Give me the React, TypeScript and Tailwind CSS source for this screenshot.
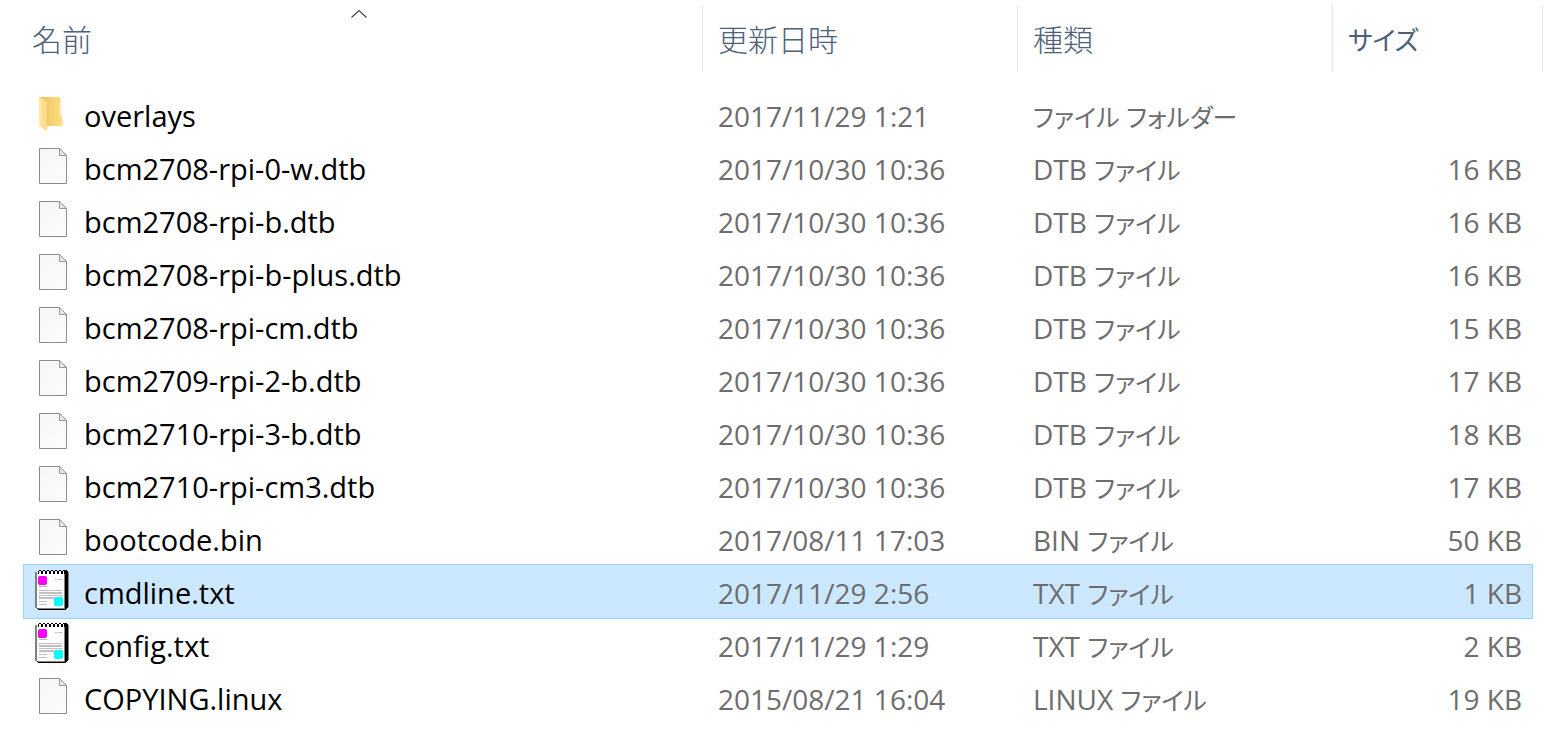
type Kind = "folder" | "file" | "text";
type Entry = { name: string; date: string; ext: string; type: string; size: string; kind: Kind; selected?: boolean };

const entries: Entry[] = [
  { name: "overlays", date: "2017/11/29 1:21", ext: "", type: "ファイル フォルダー", size: "", kind: "folder" },
  { name: "bcm2708-rpi-0-w.dtb", date: "2017/10/30 10:36", ext: "DTB", type: "ファイル", size: "16 KB", kind: "file" },
  { name: "bcm2708-rpi-b.dtb", date: "2017/10/30 10:36", ext: "DTB", type: "ファイル", size: "16 KB", kind: "file" },
  { name: "bcm2708-rpi-b-plus.dtb", date: "2017/10/30 10:36", ext: "DTB", type: "ファイル", size: "16 KB", kind: "file" },
  { name: "bcm2708-rpi-cm.dtb", date: "2017/10/30 10:36", ext: "DTB", type: "ファイル", size: "15 KB", kind: "file" },
  { name: "bcm2709-rpi-2-b.dtb", date: "2017/10/30 10:36", ext: "DTB", type: "ファイル", size: "17 KB", kind: "file" },
  { name: "bcm2710-rpi-3-b.dtb", date: "2017/10/30 10:36", ext: "DTB", type: "ファイル", size: "18 KB", kind: "file" },
  { name: "bcm2710-rpi-cm3.dtb", date: "2017/10/30 10:36", ext: "DTB", type: "ファイル", size: "17 KB", kind: "file" },
  { name: "bootcode.bin", date: "2017/08/11 17:03", ext: "BIN", type: "ファイル", size: "50 KB", kind: "file" },
  { name: "cmdline.txt", date: "2017/11/29 2:56", ext: "TXT", type: "ファイル", size: "1 KB", kind: "text", selected: true },
  { name: "config.txt", date: "2017/11/29 1:29", ext: "TXT", type: "ファイル", size: "2 KB", kind: "text" },
  { name: "COPYING.linux", date: "2015/08/21 16:04", ext: "LINUX", type: "ファイル", size: "19 KB", kind: "file" },
];

function FolderIcon() {
  return (
    <svg width="34" height="43" viewBox="0 0 34 43" aria-hidden="true">
      <defs>
        <linearGradient id="folder-back" x1="0" x2="1">
          <stop offset="0" stopColor="#e8c35c" />
          <stop offset="1" stopColor="#ffdf86" />
        </linearGradient>
        <linearGradient id="folder-front" x1="0" x2="1">
          <stop offset="0" stopColor="#ffe9a6" />
          <stop offset="1" stopColor="#fdd97b" />
        </linearGradient>
      </defs>
      <path d="M5 4H25.500V21L27.500 24V33H11Z" fill="url(#folder-back)" />
      <path d="M4 4L12 9V38L4 33Z" fill="url(#folder-front)" />
    </svg>
  );
}

function FileIcon() {
  return (
    <svg width="34" height="43" viewBox="0 0 34 43" aria-hidden="true">
      <defs>
        <linearGradient id="page" x1="0" y1="0" x2="1" y2="1">
          <stop offset="0" stopColor="#f5f6f8" />
          <stop offset="1" stopColor="#fbfcfc" />
        </linearGradient>
      </defs>
      <path d="M4.500 2.500H24.500L31.500 9.500V37.500H4.500Z" fill="url(#page)" stroke="#8c8c8c" />
      <path d="M24.500 2.500V9.500H31.500Z" fill="#e6e6e6" stroke="#999999" />
    </svg>
  );
}

function TextIcon() {
  return (
    <svg width="34" height="43" viewBox="0 1 34 43" shapeRendering="crispEdges" aria-hidden="true">
      <path d="M2 3H30V39H2Z" fill="#ffffff" />
      <path d="M0 3H2V39H0Z" fill="#808080" />
      <path d="M2 39H30V40H31V41H3V40H2Z" fill="#000000" />
      <path d="M3 39H30V40H3Z" fill="#808080" />
      <path d="M29 2H33V39H32V40H30V39H29Z" fill="#000000" />
      <path d="M29 5H30V39H29Z" fill="#808080" />
      <path d="M33 3H34V38H33Z" fill="#808080" />
      <path d="M3 2H4V5H3ZM6 2H8V5H6ZM10 2H12V5H10ZM14 2H16V5H14ZM18 2H20V5H18ZM22 2H24V5H22ZM26 2H28V5H26ZM4 1H6V2H4ZM8 1H10V2H8ZM12 1H14V2H12ZM16 1H18V2H16ZM20 1H22V2H20ZM24 1H26V2H24ZM28 1H32V2H28Z" fill="#000000" />
      <path d="M20 10H22V11H20ZM23 10H27V11H23ZM4 17H12V18H4ZM4 21H27V22H4ZM4 23H27V25H4ZM4 26H27V27H4ZM4 28H19V30H4ZM4 32H12V33H4ZM4 35H12V36H4Z" fill="#c0c0c0" />
      <path d="M4 7H11V8H12V15H11V16H4V15H3V8H4Z" fill="#ff00ff" />
      <path d="M20 28H27V29H28V36H27V37H20V36H19V29H20Z" fill="#00ffff" />
    </svg>
  );
}

const icons = { folder: FolderIcon, file: FileIcon, text: TextIcon };

function ColumnHeader({ label, first, kana }: { label: string; first?: boolean; kana?: boolean }) {
  return (
    <button
      type="button"
      className={`relative flex h-[67px] w-full items-center border-r border-[#e5e5e5] pt-0.5 ${first ? "pl-2" : "pl-[15px]"} ${kana ? "text-[26px] font-normal" : ""}`}
    >
      {label}
      {first && (
        <svg className="absolute top-1 left-1/2 -ml-3" width="16" height="10" viewBox="0 0 16 10" fill="none" aria-hidden="true">
          <path d="M0.500 8.500L8 1.500L15.500 8.500" stroke="#444444" strokeWidth="1.2" />
        </svg>
      )}
    </button>
  );
}

function Row({ entry }: { entry: Entry }) {
  const Icon = icons[entry.kind];
  const on = entry.selected;
  const middle = on ? "bg-[#cce8ff] shadow-[0_1px_#99d1ff,0_-1px_#99d1ff]" : "";
  const left = on ? "bg-[#cce8ff] shadow-[-1px_1px_#99d1ff,-1px_-1px_#99d1ff,0_1px_#99d1ff,0_-1px_#99d1ff]" : "";
  const right = on ? "bg-[#cce8ff] shadow-[1px_1px_#99d1ff,1px_-1px_#99d1ff,0_1px_#99d1ff,0_-1px_#99d1ff]" : "";
  return (
    <tr className="h-[53px]" aria-selected={!!on}>
      <td className={`p-0 text-[29px] text-black ${left}`}>
        <div className="flex items-center gap-[15px] pl-[11px]">
          <Icon />
          <span className="pt-0.5">{entry.name}</span>
        </div>
      </td>
      <td className={`p-0 pt-0.5 pl-[15px] ${middle}`}>{entry.date}</td>
      <td className={`p-0 pt-1 pl-[15px] ${middle}`}>
        {entry.ext && <span>{entry.ext} </span>}
        <span className="text-[25px]">{entry.type}</span>
      </td>
      <td className={`p-0 pt-0.5 pr-2.5 text-right ${right}`}>{entry.size}</td>
    </tr>
  );
}

export default function App() {
  return (
    <main
      lang="ja"
      className="min-h-screen bg-white pt-[5px] pr-3 pl-6 font-['Open_Sans','Noto_Sans_CJK_JP',sans-serif] text-[28px] leading-10 whitespace-nowrap text-[#6d6d6d] [font-feature-settings:'palt']"
    >
      <table className="w-full table-fixed border-separate border-spacing-0">
        <colgroup>
          <col />
          <col className="w-[315px]" />
          <col className="w-[315px]" />
          <col className="w-[199px]" />
          <col className="w-[11px]" />
        </colgroup>
        <thead className="text-left text-[30px] text-[#4c607a]">
          <tr className="h-[83px]">
            <th className="p-0 align-top font-light" aria-sort="ascending"><ColumnHeader label="名前" first /></th>
            <th className="p-0 align-top font-light"><ColumnHeader label="更新日時" /></th>
            <th className="p-0 align-top font-light"><ColumnHeader label="種類" /></th>
            <th className="p-0 align-top font-light" colSpan={2}><ColumnHeader label="サイズ" kana /></th>
          </tr>
        </thead>
        <tbody>
          {entries.map((entry) => (
            <Row key={entry.name} entry={entry} />
          ))}
        </tbody>
      </table>
    </main>
  );
}
